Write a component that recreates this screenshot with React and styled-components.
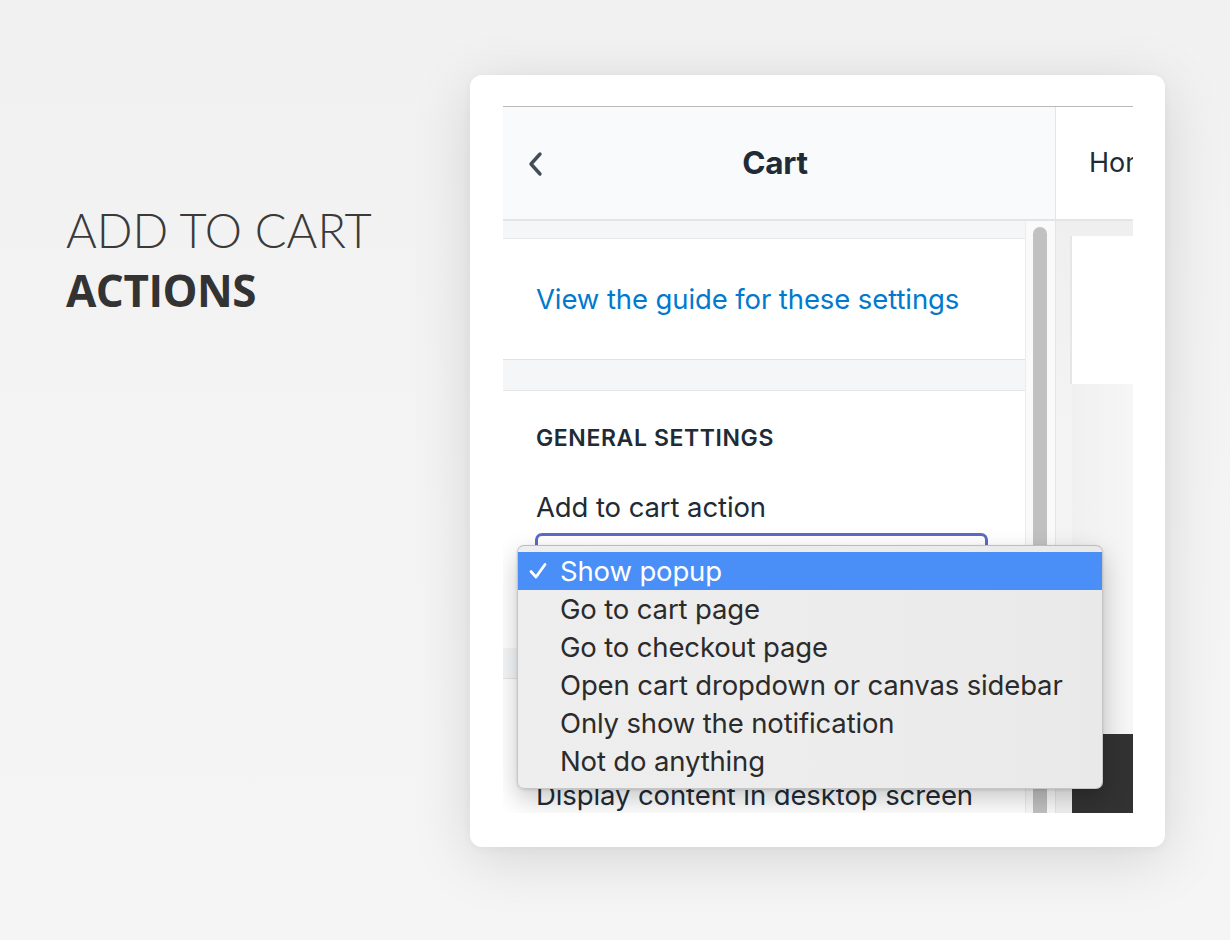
import React from 'react';
import styled, { createGlobalStyle } from 'styled-components';

const Global = createGlobalStyle`
  html, body { margin: 0; padding: 0; }
  body {
    width: 1230px;
    height: 940px;
    overflow: hidden;
    background: #f3f3f3;
    -webkit-font-smoothing: antialiased;
  }
`;

const UI_FONT = `Inter, "Noto Sans", "Liberation Sans", sans-serif`;

const Page = styled.div`
  width: 1230px;
  height: 940px;
  box-sizing: border-box;
  background: linear-gradient(180deg, #f1f1f1 0%, #f4f4f4 60%, #f5f5f5 100%);
  display: flex;
  align-items: flex-start;
  padding: 75px 0 0 66px;
`;

const Heading = styled.div`
  width: 404px;
  margin-top: 125px;
  display: flex;
  flex-direction: column;
`;

const HeadLight = styled.span`
  font-family: Lato, "Open Sans", sans-serif;
  font-weight: 300;
  font-size: 47px;
  line-height: 60px;
  letter-spacing: 0;
  color: #3a3a3a;
`;

const HeadBold = styled.span`
  font-family: "Open Sans", Lato, sans-serif;
  font-weight: 700;
  font-size: 44px;
  line-height: 60px;
  letter-spacing: -0.5px;
  color: #333;
`;

const Card = styled.div`
  width: 695px;
  height: 772px;
  box-sizing: border-box;
  background: #fff;
  border-radius: 12px;
  box-shadow: 0 12px 60px rgba(0, 0, 0, 0.13), 0 2px 10px rgba(0, 0, 0, 0.04);
  padding: 31px 32px 35px 33px;
`;

const Viewport = styled.div`
  position: relative;
  width: 630px;
  height: 706px;
  overflow: hidden;
  border-top: 1px solid #b9b9b9;
  display: flex;
  flex-direction: column;
  font-family: ${UI_FONT};
  color: #212b36;
`;

const Header = styled.div`
  flex: none;
  height: 112px;
  display: grid;
  grid-template-columns: 553px 1fr;
  border-bottom: 2px solid #e2e4e6;
`;

const HeaderMain = styled.div`
  position: relative;
  background: #f9fafb;
  border-right: 1px solid #e4e5e7;
  display: flex;
  align-items: center;
  justify-content: center;
`;

const BackButton = styled.div`
  position: absolute;
  left: 23px;
  top: 44px;
  width: 18px;
  height: 26px;
  display: flex;
`;

const HeaderTitle = styled.h1`
  margin: 0 0 2px -8px;
  font-size: 31.5px;
  font-weight: 700;
  color: #212b36;
  letter-spacing: -0.3px;
`;

const HeaderPreview = styled.div`
  background: #fff;
  display: flex;
  align-items: center;
  padding-left: 33px;
  overflow: hidden;
  white-space: nowrap;
  font-size: 27px;
  color: #212b36;
  padding-bottom: 2px;
`;

const Body = styled.div`
  flex: 1;
  min-height: 0;
  display: grid;
  grid-template-columns: 522px 31px 1fr;
  grid-template-rows: minmax(0, 1fr);
`;

const Sidebar = styled.div`
  position: relative;
  z-index: 2;
  background: #f4f6f8;
  padding-top: 17px;
  display: flex;
  flex-direction: column;
`;

const GuideCard = styled.div`
  flex: none;
  height: 120px;
  background: #fff;
  border-top: 1px solid #e6e8ea;
  border-bottom: 1px solid #dfe3e8;
  display: flex;
  align-items: center;
  padding-left: 33px;
`;

const GuideLink = styled.a`
  color: #007ace;
  font-size: 27.5px;
  text-decoration: none;
  letter-spacing: -0.1px;
`;

const Section = styled.div`
  flex: none;
  position: relative;
  z-index: ${(p) => p.$layer || 0};
  background: #fff;
  border-top: 1px solid #e3e5e7;
  margin-top: ${(p) => p.$gap}px;
  height: ${(p) => p.$height}px;
  box-sizing: border-box;
  padding: ${(p) => p.$padTop}px 35px 0 33px;
  display: flex;
  flex-direction: column;
`;

const SectionTitle = styled.h3`
  margin: 0;
  font-size: 23px;
  font-weight: 600;
  letter-spacing: 0.6px;
  color: #212b36;
  text-transform: uppercase;
  line-height: 28px;
`;

const FieldLabel = styled.label`
  margin-top: ${(p) => p.$top}px;
  font-size: 27.5px;
  line-height: 32px;
  letter-spacing: -0.1px;
  color: #212b36;
  white-space: nowrap;
`;

const SelectWrap = styled.div`
  position: relative;
  margin: 10px 0 0 -1px;
  width: 453px;
  height: 58px;
`;

const SelectBox = styled.div`
  box-sizing: border-box;
  width: 100%;
  height: 100%;
  border: 3px solid #5c6ac4;
  border-radius: 7px;
  background: #fff;
`;

const Menu = styled.ul`
  position: absolute;
  left: -18px;
  top: 12px;
  width: 586px;
  margin: 0;
  padding: 6px 0 8px;
  list-style: none;
  box-sizing: border-box;
  background: linear-gradient(90deg, #eeeeee 0%, #ececec 60%, #e9e9e9 100%);
  border: 1px solid #c6c6c6;
  border-top-color: #bdbdbd;
  border-radius: 7px;
  box-shadow: 0 10px 26px rgba(0, 0, 0, 0.22), 0 1px 3px rgba(0, 0, 0, 0.12);
  z-index: 10;
`;

const MenuItem = styled.li`
  position: relative;
  height: 38px;
  display: flex;
  align-items: center;
  padding-left: 42px;
  font-size: 27.5px;
  letter-spacing: -0.15px;
  white-space: nowrap;
  color: ${(p) => (p.$active ? '#fff' : '#2b2b2b')};
  background: ${(p) => (p.$active ? '#4a8ff7' : 'transparent')};
`;

const Check = styled.span`
  position: absolute;
  left: 10px;
  top: 0;
  height: 38px;
  display: flex;
  align-items: center;
`;

const Track = styled.div`
  background: #fafafa;
  border-left: 1px solid #ececec;
  border-right: 1px solid #e4e5e7;
  padding: 6px 0 0 7px;
  display: flex;
`;

const Thumb = styled.div`
  width: 14px;
  flex: none;
  background: #c1c1c1;
  border-radius: 7px 7px 0 0;
`;

const Preview = styled.div`
  background: linear-gradient(180deg, #efefef 0%, #f4f4f4 40%, #f2f2f2 100%);
  padding: 15px 0 0 16px;
  display: flex;
  flex-direction: column;
`;

const PreviewHero = styled.div`
  height: 148px;
  background: #fff;
  box-shadow: -2px 0 0 #e6e6e6;
`;

const PreviewFill = styled.div`
  flex: 1;
  background: linear-gradient(90deg, #f0f0f0 0%, #f6f6f6 100%);
`;

const PreviewDark = styled.div`
  height: 79px;
  background: #323232;
`;

const options = [
  'Show popup',
  'Go to cart page',
  'Go to checkout page',
  'Open cart dropdown or canvas sidebar',
  'Only show the notification',
  'Not do anything',
];

export default function App() {
  return (
    <>
      <Global />
      <Page>
        <Heading>
          <HeadLight>ADD TO CART</HeadLight>
          <HeadBold>ACTIONS</HeadBold>
        </Heading>
        <Card>
          <Viewport>
            <Header>
              <HeaderMain>
                <BackButton>
                  <svg width="18" height="26" viewBox="0 0 18 26" fill="none">
                    <path d="M14 3 L5 13 L14 23" stroke="#434d59" strokeWidth="3.4" strokeLinecap="round" strokeLinejoin="round" />
                  </svg>
                </BackButton>
                <HeaderTitle>Cart</HeaderTitle>
              </HeaderMain>
              <HeaderPreview>Home</HeaderPreview>
            </Header>
            <Body>
              <Sidebar>
                <GuideCard>
                  <GuideLink href="#">View the guide for these settings</GuideLink>
                </GuideCard>
                <Section $gap={30} $height={258} $layer={5} $padTop={33}>
                  <SectionTitle>General settings</SectionTitle>
                  <FieldLabel $top={39}>Add to cart action</FieldLabel>
                  <SelectWrap>
                    <SelectBox />
                    <Menu>
                      {options.map((o, i) => (
                        <MenuItem key={o} $active={i === 0}>
                          {i === 0 && (
                            <Check>
                              <svg width="20" height="18" viewBox="0 0 20 18" fill="none">
                                <path d="M3 9.5 L8 15 L17 2.5" stroke="#fff" strokeWidth="2.8" strokeLinecap="round" strokeLinejoin="round" />
                              </svg>
                            </Check>
                          )}
                          {o}
                        </MenuItem>
                      ))}
                    </Menu>
                  </SelectWrap>
                </Section>
                <Section $gap={30} $height={200} $padTop={100}>
                  <FieldLabel $top={0}>Display content in desktop screen</FieldLabel>
                </Section>
              </Sidebar>
              <Track>
                <Thumb />
              </Track>
              <Preview>
                <PreviewHero />
                <PreviewFill />
                <PreviewDark />
              </Preview>
            </Body>
          </Viewport>
        </Card>
      </Page>
    </>
  );
}
